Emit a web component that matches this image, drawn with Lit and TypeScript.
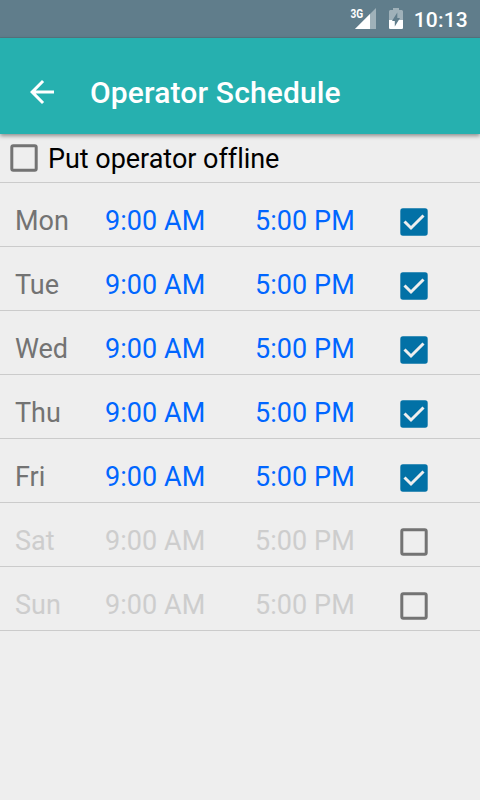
import { LitElement, html, css } from "lit";
import { customElement, property } from "lit/decorators.js";
import { classMap } from "lit/directives/class-map.js";

interface Day {
  name: string;
  from: string;
  to: string;
  active: boolean;
}

const DAYS: Day[] = ["Mon", "Tue", "Wed", "Thu", "Fri", "Sat", "Sun"].map((name, i) => ({
  name,
  from: "9:00 AM",
  to: "5:00 PM",
  active: i < 5,
}));

@customElement("check-box")
export class CheckBox extends LitElement {
  @property({ type: Boolean }) checked = false;

  static styles = css`
    :host { display: block; width: 36px; height: 36px; }
    svg { display: block; }
  `;

  render() {
    return this.checked
      ? html`<svg width="36" height="36" viewBox="0 0 36 36" fill="none">
          <rect x="4.3" y="4.3" width="27.4" height="27.4" rx="2.6" fill="#0271a6" />
          <path d="M8.5 17.5 L15 24 L27.5 11.5" stroke="#eee" stroke-width="3" />
        </svg>`
      : html`<svg width="36" height="36" viewBox="0 0 36 36" fill="none">
          <rect x="5.8" y="5.8" width="24.4" height="24.4" rx="1.5" stroke="#737373" stroke-width="3" />
        </svg>`;
  }
}

@customElement("status-bar")
export class StatusBar extends LitElement {
  static styles = css`
    :host {
      display: flex; align-items: flex-start; justify-content: flex-end;
      box-sizing: border-box; height: 38px; padding: 8px 12px 0 0;
      background: #607d8b; color: #fff; border-bottom: 1px solid #587480;
    }
    .network {
      font: 700 12px/12px Roboto, sans-serif; transform: scaleX(0.84);
      transform-origin: right; margin: 0 -9px 0 0;
    }
    .signal { margin-right: 12px; }
    .battery { margin-right: 11px; }
    .time { font: 500 21px/24px Roboto, sans-serif; letter-spacing: 0.2px; }
  `;

  render() {
    return html`
      <span class="network">3G</span>
      <svg class="signal" width="22" height="22" viewBox="0 0 22 22">
        <path d="M1 21 L22 0 V21Z" fill="#fff" fill-opacity=".4" />
        <path d="M1 21 L16 6 V21Z" fill="#fff" />
      </svg>
      <svg class="battery" width="15" height="22" viewBox="0 0 15 22">
        <path d="M1 12V3.5Q1 2 2.3 2H5V0H11V2H13.7Q15 2 15 3.5V12Z" fill="#fff" fill-opacity=".4" />
        <path d="M1 12H15V20Q15 21 13.7 21H2.3Q1 21 1 20Z" fill="#fff" />
        <path d="M9.3 4.5V10H12L6.8 18.5V13H4Z" fill="#607d8b" />
      </svg>
      <span class="time">10:13</span>
    `;
  }
}

@customElement("app-root")
export class AppRoot extends LitElement {
  static styles = css`
    :host {
      display: flex; flex-direction: column; height: 800px;
      background: #eee; font: 27px/32px Roboto, sans-serif; overflow: hidden;
    }
    .toolbar {
      position: relative; display: flex; align-items: center; box-sizing: border-box;
      height: 96px; padding: 12px 24px 0; gap: 30px;
      background: #26b0af; color: #fff;
      box-shadow: 0 2px 4px rgba(0, 0, 0, 0.4);
    }
    .title { font-size: 30px; line-height: 36px; font-weight: 500; letter-spacing: 0.14px; padding-top: 2px; }
    .offline {
      display: flex; align-items: center; box-sizing: border-box; height: 49px;
      padding: 0 6px; gap: 6px; color: #000; border-bottom: 1px solid #cbcbcb;
    }
    .offline span { padding-top: 2px; letter-spacing: -0.03px; font-variant-ligatures: none; }
    .day {
      display: grid; grid-template-columns: 90px 150px 141px 36px; align-items: center;
      box-sizing: border-box; height: 64px; padding: 13px 0 0 15px;
      color: #737373; border-bottom: 1px solid #cbcbcb;
    }
    .time { color: #0066ff; letter-spacing: 0.06px; }
    .day check-box { margin-top: 2px; }
    .inactive, .inactive .time { color: #cdcdcd; }
  `;

  render() {
    return html`
      <status-bar></status-bar>
      <div class="toolbar">
        <svg width="36" height="36" viewBox="0 0 24 24" fill="#fff">
          <path d="M20 11H7.83l5.59-5.59L12 4l-8 8 8 8 1.41-1.41L7.83 13H20v-2z" />
        </svg>
        <span class="title">Operator Schedule</span>
      </div>
      <div class="offline">
        <check-box></check-box>
        <span>Put operator offline</span>
      </div>
      ${DAYS.map(
        (d) => html`<div class=${classMap({ day: true, inactive: !d.active })}>
          <span>${d.name}</span>
          <span class="time">${d.from}</span>
          <span class="time">${d.to}</span>
          <check-box ?checked=${d.active}></check-box>
        </div>`,
      )}
    `;
  }
}
